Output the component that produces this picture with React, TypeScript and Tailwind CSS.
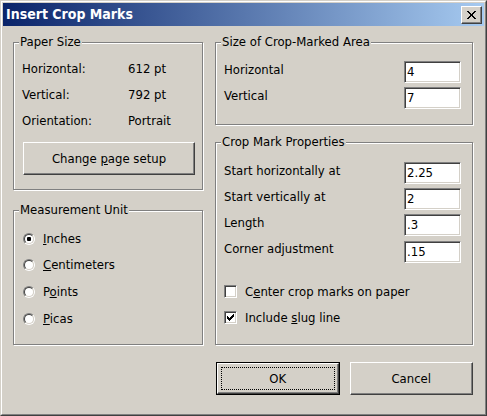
import React from "react";

const raised =
  "border border-t-white border-l-white border-b-[#404040] border-r-[#404040] shadow-[inset_-1px_-1px_0_#808080] bg-[#d4d0c8]";
const sunken =
  "border border-t-[#808080] border-l-[#808080] border-b-white border-r-white shadow-[inset_1px_1px_0_#404040,inset_-1px_-1px_0_#d4d0c8] bg-white";

function Group({ title, className, children }: { title: string; className: string; children?: React.ReactNode }) {
  return (
    <div className={`relative border border-[#808080] shadow-[inset_1px_1px_0_#fff,1px_1px_0_#fff] ${className}`}>
      <span className="absolute left-[5px] top-[-9px] leading-[16px] px-px bg-[#d4d0c8] whitespace-nowrap">{title}</span>
      {children}
    </div>
  );
}

function Field({ value }: { value: string }) {
  return <div className={`w-[57px] h-[22px] flex items-center pl-[2px] ${sunken}`}>{value}</div>;
}

function Radio({ checked, children, h }: { checked?: boolean; children: React.ReactNode; h: string }) {
  return (
    <div className={`flex items-center gap-[8px] ${h}`}>
      <div className="w-[12px] h-[12px] rounded-full border border-t-[#808080] border-l-[#808080] border-b-white border-r-white flex">
        <div className="flex-1 rounded-full border border-t-[#404040] border-l-[#404040] border-b-[#d4d0c8] border-r-[#d4d0c8] bg-white flex items-center justify-center">
          {checked && <div className="w-[4px] h-[4px] rounded-[1px] bg-black" />}
        </div>
      </div>
      <span>{children}</span>
    </div>
  );
}

function Check({ checked, children }: { checked?: boolean; children: React.ReactNode }) {
  const cols = [
    [3, 5],
    [4, 6],
    [5, 7],
    [6, 6],
    [7, 5],
    [8, 4],
    [9, 3],
  ];
  return (
    <div className="flex items-center gap-[8px] h-[26px]">
      <div className={`relative w-[13px] h-[13px] ${sunken}`}>
        {checked && (
          <svg className="absolute left-[-1px] top-[-1px]" width="13" height="13" viewBox="0 0 13 13" shapeRendering="crispEdges">
            {cols.map(([x, y]) => (
              <rect key={x} x={x} y={y} width="1" height="3" fill="#000" />
            ))}
          </svg>
        )}
      </div>
      <span className="mt-[2px]">{children}</span>
    </div>
  );
}

function InputRow({ label, value, h = "h-[26px]" }: { label: string; value: string; h?: string }) {
  return (
    <div className={`flex items-center justify-between ${h}`}>
      <span className="mb-[5px]">{label}</span>
      <Field value={value} />
    </div>
  );
}

function InfoRow({ label, value }: { label: string; value: string }) {
  return (
    <div className="flex items-center h-[26px]">
      <span className="w-[106px]">{label}</span>
      <span>{value}</span>
    </div>
  );
}

export default function App() {
  return (
    <div className="w-[487px] h-[416px] border border-t-[#d4d0c8] border-l-[#d4d0c8] border-b-[#404040] border-r-[#404040] font-['DejaVu_Sans_Condensed','Liberation_Sans',sans-serif] text-[13px] text-black">
      <div className="w-full h-full border border-t-white border-l-white border-b-[#808080] border-r-[#808080] bg-[#d4d0c8] p-px flex flex-col">
        <div className="h-[23px] flex items-center justify-between bg-[linear-gradient(to_right,#0a246a,#a6caf0)] pl-[3px] pr-[2px]">
          <span className="text-white font-bold text-[14px]">Insert Crop Marks</span>
          <div className={`w-[21px] h-[18px] flex items-center justify-center ${raised}`}>
            <svg width="9" height="8" viewBox="0 0 9 8" shapeRendering="crispEdges">
              <path d="M0 0h2l2.5 2.6L7 0h2L5.5 4 9 8H7L4.5 5.4 2 8H0l3.5-4z" fill="#000" />
            </svg>
          </div>
        </div>
        <div className="flex pl-[10px] pt-[16px] gap-[12px]">
          <div className="flex flex-col w-[190px]">
            <Group title="Paper Size" className="h-[148px]">
              <div className="flex flex-col pt-[13px] pl-[8px]">
                <InfoRow label="Horizontal:" value="612 pt" />
                <InfoRow label="Vertical:" value="792 pt" />
                <InfoRow label="Orientation:" value="Portrait" />
                <div className={`ml-[1px] mt-[8px] w-[172px] h-[33px] flex items-center justify-center ${raised}`}>
                  <span>
                    Change <u>p</u>age setup
                  </span>
                </div>
              </div>
            </Group>
            <Group title="Measurement Unit" className="h-[135px] mt-[20px]">
              <div className="flex flex-col pt-[15px] pl-[9px]">
                <Radio checked h="h-[26px]">
                  <u>I</u>nches
                </Radio>
                <Radio h="h-[26px]">
                  <u>C</u>entimeters
                </Radio>
                <Radio h="h-[28px]">
                  P<u>o</u>ints
                </Radio>
                <Radio h="h-[26px]">
                  <u>P</u>icas
                </Radio>
              </div>
            </Group>
          </div>
          <div className="flex flex-col w-[258px]">
            <Group title="Size of Crop-Marked Area" className="h-[83px]">
              <div className="flex flex-col pt-[16px] pl-[8px] pr-[11px]">
                <InputRow label="Horizontal" value="4" />
                <InputRow label="Vertical" value="7" />
              </div>
            </Group>
            <Group title="Crop Mark Properties" className="h-[203px] mt-[17px]">
              <div className="flex flex-col pt-[17px] pl-[8px] pr-[11px]">
                <InputRow label="Start horizontally at" value="2.25" />
                <InputRow label="Start vertically at" value="2" />
                <InputRow label="Length" value=".3" />
                <InputRow label="Corner adjustment" value=".15" h="h-[27px]" />
                <div className="mt-[13px]">
                  <Check>
                    C<u>e</u>nter crop marks on paper
                  </Check>
                  <Check checked>
                    Include <u>s</u>lug line
                  </Check>
                </div>
              </div>
            </Group>
            <div className="flex mt-[17px] ml-[1px] gap-[10px]">
              <div className="w-[124px] h-[33px] border border-black flex">
                <div className={`relative flex-1 flex items-center justify-center ${raised}`}>
                  <div className="absolute inset-[3px] border border-dotted border-black" />
                  <span>OK</span>
                </div>
              </div>
              <div className={`w-[124px] h-[33px] flex items-center justify-center ${raised}`}>
                <span>Cancel</span>
              </div>
            </div>
          </div>
        </div>
      </div>
    </div>
  );
}
